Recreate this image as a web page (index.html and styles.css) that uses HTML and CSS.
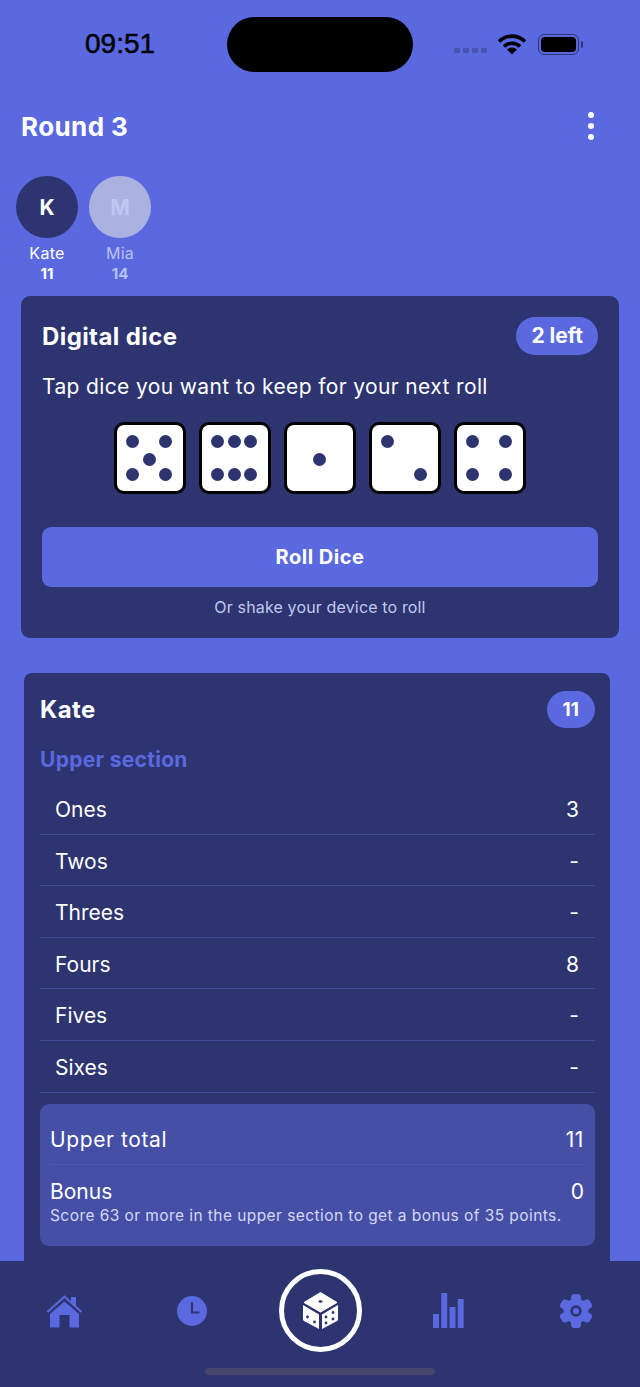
FILE: index.html
```html
<!DOCTYPE html>
<html lang="en">
<head>
    <meta charset="UTF-8">
    <meta name="viewport" content="width=device-width, initial-scale=1.0">
    <title>Round 3</title>
    <link rel="stylesheet" href="styles.css">
</head>
<body>
  <div class="phone">
    <div class="status">
      <span class="time">09:51</span>
      <div class="island"></div>
      <div class="status-icons">
        <div class="signal"><i></i><i></i><i></i><i></i></div>
        <svg class="wifi" width="28" height="21" viewBox="0 0 28 21">
          <path d="M1 7.5a18.5 18.5 0 0 1 26 0" fill="none" stroke="#000" stroke-width="3.6"/>
          <path d="M6 12.5a11.5 11.5 0 0 1 16 0" fill="none" stroke="#000" stroke-width="3.6"/>
          <path d="M14 20.5l-5-5a7 7 0 0 1 10 0z" fill="#000"/>
        </svg>
        <div class="battery"><div class="battery-fill"></div></div>
        <div class="battery-cap"></div>
      </div>
    </div>

    <div class="title-row">
      <h1>Round 3</h1>
      <div class="more"><i></i><i></i><i></i></div>
    </div>

    <div class="players">
      <div class="player">
        <div class="avatar">K</div>
        <div class="player-name">Kate</div>
        <div class="player-score">11</div>
      </div>
      <div class="player inactive">
        <div class="avatar">M</div>
        <div class="player-name">Mia</div>
        <div class="player-score">14</div>
      </div>
    </div>

    <section class="dice-card">
      <div class="card-head">
        <h2>Digital dice</h2>
        <span class="pill">2 left</span>
      </div>
      <p class="hint">Tap dice you want to keep for your next roll</p>
      <div class="dice-row">
        <div class="die">
          <i class="a1"></i><i class="a3"></i><i class="b2"></i><i class="c1"></i><i class="c3"></i>
        </div>
        <div class="die">
          <i class="a1"></i><i class="a2"></i><i class="a3"></i><i class="c1"></i><i class="c2"></i><i class="c3"></i>
        </div>
        <div class="die"><i class="b2"></i></div>
        <div class="die"><i class="a1"></i><i class="c3"></i></div>
        <div class="die">
          <i class="a1"></i><i class="a3"></i><i class="c1"></i><i class="c3"></i>
        </div>
      </div>
      <button class="roll">Roll Dice</button>
      <p class="shake">Or shake your device to roll</p>
    </section>

    <section class="score-card">
      <div class="card-head score-head">
        <h2>Kate</h2>
        <span class="pill pill-small">11</span>
      </div>
      <h3>Upper section</h3>
      <div class="score-row"><span>Ones</span><span>3</span></div>
      <div class="score-row"><span>Twos</span><span>-</span></div>
      <div class="score-row"><span>Threes</span><span>-</span></div>
      <div class="score-row"><span>Fours</span><span>8</span></div>
      <div class="score-row"><span>Fives</span><span>-</span></div>
      <div class="score-row"><span>Sixes</span><span>-</span></div>
      <div class="totals">
        <div class="total-row"><span>Upper total</span><span>11</span></div>
        <div class="bonus">
          <div class="bonus-row"><span>Bonus</span><span>0</span></div>
          <p>Score 63 or more in the upper section to get a bonus of 35 points.</p>
        </div>
      </div>
    </section>

    <nav class="tabbar">
      <svg width="35" height="34" viewBox="0 0 35 34">
        <path d="M24 3h5v10l-5-4z" fill="#5a69e0"/>
        <path d="M.5 18L17.500 2.500 34.500 18" fill="none" stroke="#5a69e0" stroke-width="2"/>
        <path d="M3 20L17.500 7.500 32 20v13.500h-9.500V21h-10v12.500H3z" fill="#5a69e0"/>
      </svg>
      <svg width="30" height="30" viewBox="0 0 30 30">
        <circle cx="15" cy="15" r="15" fill="#5a69e0"/>
        <path d="M15 6v10.500h7.500" fill="none" stroke="#2d3470" stroke-width="2.2"/>
      </svg>
      <div class="roll-tab">
        <svg width="35" height="37" viewBox="0 0 35 37">
          <path d="M17.500 0.500L34 10.500 17.500 20 1 10.500z" fill="#fff" stroke="#fff" stroke-linejoin="round"/>
          <path d="M0 13l16 9.500V37L1 29q-1-.5-1-2z" fill="#fff"/>
          <path d="M35 13l-16 9.500V37l15-8q1-.5 1-2z" fill="#fff"/>
          <g fill="#2d3470">
            <ellipse cx="17.500" cy="9.500" rx="2" ry="1.300"/>
            <circle cx="4.500" cy="25" r="1.400"/>
            <circle cx="11.500" cy="30" r="1.400"/>
            <circle cx="23" cy="25" r="1.400"/>
            <circle cx="30" cy="20.500" r="1.400"/>
            <circle cx="23" cy="31" r="1.400"/>
            <circle cx="30" cy="27" r="1.400"/>
          </g>
        </svg>
      </div>
      <svg width="31" height="35" viewBox="0 0 31 35">
        <rect x="0" y="21" width="6" height="14" fill="#5a69e0"/>
        <rect x="8.200" y="0" width="6" height="35" fill="#5a69e0"/>
        <rect x="16.500" y="14" width="6" height="21" fill="#5a69e0"/>
        <rect x="24.700" y="6" width="6" height="29" fill="#5a69e0"/>
      </svg>
      <svg width="34" height="34" viewBox="0 0 34 34">
        <g fill="#5a69e0">
          <circle cx="17" cy="17" r="12.500"/>
          <rect x="12" y="0" width="10" height="34" rx="3.500"/>
          <rect x="12" y="0" width="10" height="34" rx="3.500" transform="rotate(60 17 17)"/>
          <rect x="12" y="0" width="10" height="34" rx="3.500" transform="rotate(120 17 17)"/>
        </g>
        <circle cx="17" cy="17" r="4.400" fill="none" stroke="#2d3470" stroke-width="2.600"/>
      </svg>
      <div class="home-bar"></div>
    </nav>
  </div>
</body>
</html>
```
FILE: styles.css
```css
* {
  box-sizing: border-box;
}
html, body {
  margin: 0;
  padding: 0;
}
body {
  font-family: Inter, "Noto Sans", sans-serif;
  color: #fff;
  background: #5a69e0;
}
.phone {
  position: relative;
  width: 640px;
  height: 1387px;
  overflow: hidden;
  background: #5a69e0;
}

/* status bar */
.status {
  display: flex;
  align-items: center;
  height: 55px;
  margin-top: 17px;
  padding-left: 85px;
}
.time {
  width: 142px;
  margin-top: -2px;
  font-family: "Liberation Sans", sans-serif;
  font-size: 28px;
  color: #000;
  -webkit-text-stroke: 0.5px #000;
}
.island {
  width: 186px;
  height: 55px;
  background: #000;
  border-radius: 28px;
}
.status-icons {
  display: flex;
  align-items: center;
  margin-left: 41px;
}
.signal {
  display: flex;
  gap: 3px;
  margin-top: 12px;
}
.signal i {
  width: 6px;
  height: 5px;
  background: #4652ad;
  border-radius: 1px;
}
.wifi {
  margin-left: 11px;
}
.battery {
  width: 41px;
  height: 21px;
  margin-left: 12px;
  padding: 2px;
  border: 1.500px solid #2d3470;
  border-radius: 6px;
}
.battery-fill {
  height: 100%;
  background: #000;
  border-radius: 4px;
}
.battery-cap {
  width: 2px;
  height: 7px;
  margin-left: 2px;
  background: #2d3470;
  border-radius: 0 2px 2px 0;
}

/* title */
.title-row {
  display: flex;
  justify-content: space-between;
  align-items: center;
  height: 40px;
  margin-top: 34px;
  padding: 0 46px 0 21px;
}
h1 {
  margin: 0;
  font-size: 26px;
  font-weight: 700;
  letter-spacing: 0.4px;
}
.more {
  display: flex;
  flex-direction: column;
  gap: 5px;
}
.more i {
  width: 6px;
  height: 6px;
  background: #fff;
  border-radius: 50%;
}

/* players */
.players {
  display: flex;
  gap: 11px;
  margin-top: 30px;
  padding-left: 16px;
}
.player {
  width: 62px;
  text-align: center;
}
.avatar {
  width: 62px;
  height: 62px;
  margin-bottom: 5px;
  background: #2d3470;
  border-radius: 50%;
  font-size: 21px;
  font-weight: 700;
  line-height: 64px;
}
.player-name {
  font-size: 16px;
  letter-spacing: 0.3px;
  line-height: 21px;
}
.player-score {
  font-size: 15px;
  font-weight: 700;
  line-height: 20px;
}
.inactive {
  color: #b9c0ef;
}
.inactive .avatar {
  background: #abb2e0;
  color: #bfc6f2;
}

/* shared card head */
.card-head {
  display: flex;
  justify-content: space-between;
  align-items: center;
}
h2 {
  margin: 0;
  font-size: 24px;
  font-weight: 700;
  letter-spacing: 0.4px;
}
.pill {
  padding: 0 15px;
  background: #5a69e0;
  border-radius: 20px;
  font-size: 21px;
  font-weight: 700;
  line-height: 38px;
}
.pill-small {
  padding: 0 16px;
  font-size: 19px;
  line-height: 37px;
}

/* dice card */
.dice-card {
  height: 342px;
  margin: 12px 21px 0;
  padding: 21px 21px 0;
  background: #2d3470;
  border-radius: 9px;
}
.hint {
  margin: 17px 0 0;
  font-size: 21px;
  letter-spacing: 0.37px;
  line-height: 30px;
}
.dice-row {
  display: flex;
  justify-content: center;
  gap: 13px;
  margin-top: 20px;
}
.die {
  position: relative;
  width: 72px;
  height: 72px;
  background: #fff;
  border: 3px solid #000;
  border-radius: 10px;
}
.die i {
  position: absolute;
  width: 13px;
  height: 13px;
  background: #2d3470;
  border-radius: 50%;
}
.a1, .a2, .a3 { top: 9.500px; }
.b2 { top: 27.500px; }
.c1, .c2, .c3 { top: 43px; }
.a1, .c1 { left: 9px; }
.a2, .b2, .c2 { left: 26px; }
.a3, .c3 { left: 42px; }
.roll {
  display: block;
  width: 100%;
  height: 60px;
  margin-top: 33px;
  background: #5a69e0;
  border: none;
  border-radius: 9px;
  color: #fff;
  font-family: inherit;
  font-size: 20px;
  font-weight: 700;
  letter-spacing: 0.5px;
}
.shake {
  margin: 9px 0 0;
  color: #c3c8f0;
  font-size: 16px;
  letter-spacing: 0.15px;
  line-height: 22px;
  text-align: center;
}

/* score card */
.score-card {
  height: 640px;
  margin: 35px 30px 0 24px;
  padding: 17px 15px 0 16px;
  background: #2d3470;
  border-radius: 8px 8px 0 0;
}
.score-head {
  min-height: 38px;
}
h3 {
  margin: 17px 0 8px;
  color: #5a69e0;
  font-size: 21px;
  font-weight: 700;
  letter-spacing: 0.3px;
  line-height: 30px;
}
.score-row {
  display: flex;
  justify-content: space-between;
  height: 51.600px;
  padding: 0 16px 0 15px;
  border-bottom: 1px solid #414a94;
  font-size: 21px;
  line-height: 53px;
}
.totals {
  margin-top: 11px;
  padding: 0 11px 0 10px;
  background: #454fa6;
  border-radius: 9px;
  height: 142px;
}
.total-row {
  display: flex;
  justify-content: space-between;
  height: 61px;
  border-bottom: 1px solid #4d58b4;
  font-size: 21px;
  letter-spacing: 0.6px;
  line-height: 71px;
}
.bonus-row {
  display: flex;
  justify-content: space-between;
  margin-top: 13px;
  font-size: 21px;
  line-height: 28px;
}
.bonus p {
  margin: 0;
  color: #d5d8f5;
  font-size: 15.500px;
  letter-spacing: 0.43px;
  line-height: 20px;
  white-space: nowrap;
}

/* bottom tabs */
.tabbar {
  position: absolute;
  left: 0;
  right: 0;
  bottom: 0;
  display: grid;
  grid-template-columns: repeat(5, 1fr);
  justify-items: center;
  align-items: center;
  height: 126px;
  padding-bottom: 27px;
  background: #2d3470;
}
.roll-tab {
  display: flex;
  justify-content: center;
  align-items: center;
  width: 83px;
  height: 83px;
  border: 5px solid #fff;
  border-radius: 50%;
}
.home-bar {
  position: absolute;
  left: 205px;
  bottom: 12px;
  width: 230px;
  height: 7px;
  background: #45476f;
  border-radius: 4px;
}
```
